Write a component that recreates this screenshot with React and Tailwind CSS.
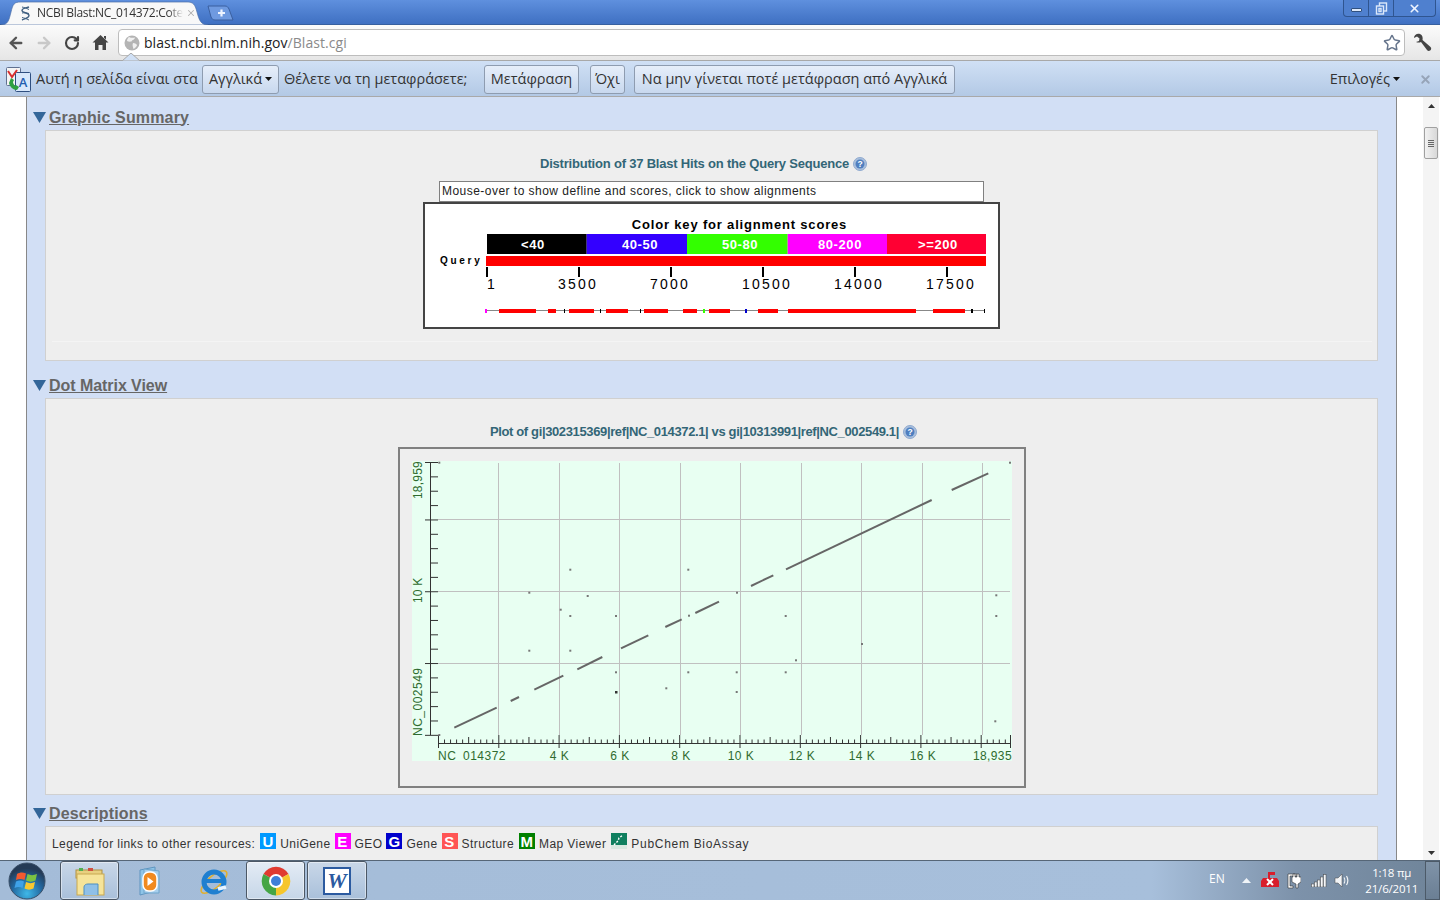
import { ArrowLeft, ArrowRight, RotateCw, Star, X } from 'lucide-react'

const SEGMENTS = [
  [454.3, 727.7, 496.7, 707.7], [510.7, 701, 519, 697], [534.3, 689.7, 563.3, 675.7],
  [577.3, 669.3, 602.3, 657], [621, 648.3, 648.3, 635.3], [665.3, 627, 681.7, 619.3],
  [695.3, 613, 719, 601.7], [751, 586, 773.3, 575.3], [786, 569.3, 931.7, 500], [951.7, 490, 988.3, 473.3],
]

const DOTS = [
  [529.3, 592.7], [587.7, 596], [560.7, 609.7], [570.3, 569.7], [688.3, 569.7], [570.3, 616], [616, 616], [689, 615.7],
  [529.3, 650.7], [570.3, 650.7], [616, 672.3], [688.3, 672.3], [666.3, 688.3], [737, 592.7], [785.7, 616],
  [862, 644], [796, 660.3], [736.7, 672.3], [785.7, 672.3], [736.7, 692], [996.3, 595.3], [996.3, 616], [995.3, 721.3],
  [1010, 462.7], [439.3, 462.7], [439.3, 735],
]

const HITS = [
  [499, 536], [548, 556], [569, 594], [606, 628], [644, 668], [683, 697], [709, 730], [758, 778], [788, 916], [933, 965],
]

const KEY = [
  ['<40', 487, 586.7, '#000000', 533], ['40-50', 586.7, 687, '#3300ff', 640], ['50-80', 687, 787.7, '#33ff00', 740],
  ['80-200', 787.7, 887, '#ff00ff', 840], ['>=200', 887, 986, '#ff0033', 938],
]

const RULER = [['1', 487, 487], ['3500', 579, 558], ['7000', 671, 650], ['10500', 763, 742], ['14000', 855, 834], ['17500', 947, 926]]

function HelpIcon() {
  return (
    <svg width="14" height="14" viewBox="0 0 14 14" className="shrink-0">
      <circle cx="7" cy="7" r="6.5" fill="#a9bfdc" stroke="#8fa9cf" />
      <circle cx="7" cy="7" r="4.5" fill="#4f7fc0" />
      <text x="7" y="10" textAnchor="middle" fontSize="8.5" fontWeight="700" fill="#fff" fontFamily="Liberation Sans">?</text>
    </svg>
  )
}

function Heading({ className = 'tracking-[0.15px]', children }) {
  return (
    <div className="flex items-center h-[18px] mb-[4px] ml-[6px] pt-[1px]">
      <svg width="13" height="11" viewBox="0 0 13 11" className="mr-[3px] shrink-0">
        <path d="M0 0H13L6.5 11Z" fill="#336699" />
      </svg>
      <span className={`text-[16px] font-bold underline text-[#666666] ${className}`}>{children}</span>
    </div>
  )
}

function ChartTitle({ className, children }) {
  return (
    <div className={`flex items-center gap-[4px] h-[16px] mr-[16px] text-[13px] font-bold text-[#336677] ${className}`}>
      <span>{children}</span>
      <HelpIcon />
    </div>
  )
}

function ColorKey() {
  return (
    <svg width="573" height="122" viewBox="425 204 573 122" fontFamily="Liberation Sans" className="block">
      <text x="739.5" y="229" textAnchor="middle" fontSize="13" fontWeight="700" letterSpacing="0.82">Color key for alignment scores</text>
      {KEY.map(([label, x1, x2, fill, cx]) => (
        <g key={label}>
          <rect x={x1} y="234" width={x2 - x1} height="20" fill={fill} />
          <text x={cx} y="249" textAnchor="middle" fontSize="13" fontWeight="700" letterSpacing="0.6" fill="#fff">{label}</text>
        </g>
      ))}
      <text x="440" y="264" fontSize="10" fontWeight="700" letterSpacing="2.7">Query</text>
      <rect x="486" y="256" width="500" height="10" fill="#ff0000" />
      {RULER.map(([label, x, tx]) => (
        <g key={label}>
          <rect x={x - 1} y="267" width="2" height="10" fill="#000" />
          <text x={tx} y="289" fontSize="14" letterSpacing="2.2">{label}</text>
        </g>
      ))}
      <rect x="486" y="310" width="499" height="1" fill="#888888" />
      {HITS.map(([a, b]) => <rect key={a} x={a} y="309" width={b - a} height="4" fill="#ff0000" />)}
      <rect x="485" y="309" width="2" height="4" fill="#ff00ff" />
      <rect x="703" y="309" width="2" height="4" fill="#33ff00" />
      <rect x="745" y="309" width="2" height="4" fill="#0000cc" />
      <rect x="971" y="309" width="2" height="4" fill="#000" />
      {[564, 600, 640, 984].map((x) => <rect key={x} x={x} y="309" width="1" height="4" fill="#000" />)}
    </svg>
  )
}

function DotMatrix() {
  const xTicks = []
  for (let i = 0; i * 6.03 <= 572; i++) {
    const x = 438.5 + i * 6.03
    const top = i % 10 === 0 ? 735 : i % 5 === 0 ? 737 : 739.5
    const bottom = i % 10 === 0 ? 748 : 743
    xTicks.push(<line key={i} x1={x} x2={x} y1={top} y2={bottom} />)
  }
  xTicks.push(<line key="end" x1="1010.5" x2="1010.5" y1="735" y2="748" />)
  const yTicks = []
  for (let i = 0; i <= 19; i++) {
    const y = 462.5 + i * 14.36
    const major = i === 0 || (i + 1) % 5 === 0
    yTicks.push(<line key={i} x1={major ? 425 : 430} x2="438" y1={y} y2={y} />)
  }
  return (
    <svg width="624" height="337" viewBox="400 449 624 337" fontFamily="Liberation Sans" className="block">
      <rect x="412" y="461" width="600" height="300" fill="#e8fff2" />
      <g stroke="#c0c0c0" strokeWidth="1">
        {[498.5, 559.5, 619.5, 680.5, 740.5, 801.5, 861.5, 922.5, 982.5].map((x) => <line key={x} x1={x} x2={x} y1="463" y2="735" />)}
        {[519.5, 591.5, 663.5].map((y) => <line key={y} x1="438" x2="1010" y1={y} y2={y} />)}
      </g>
      <g stroke="#333333" strokeWidth="1">
        <line x1="430.5" x2="430.5" y1="462" y2="735" />
        <line x1="438" x2="1011" y1="743.5" y2="743.5" />
        {xTicks}
        {yTicks}
      </g>
      <g stroke="#666666" strokeWidth="2">
        {SEGMENTS.map((s) => <line key={s[0]} x1={s[0]} y1={s[1]} x2={s[2]} y2={s[3]} />)}
      </g>
      {DOTS.map(([x, y]) => <rect key={`${x}-${y}`} x={x - 1} y={y - 1} width="2" height="2" fill="#777777" />)}
      <rect x="615" y="691" width="2.5" height="2.5" fill="#333333" />
      <g fill="#2f6b2f" fontSize="12">
        <text x="438" y="760" letterSpacing="0.5">NC</text>
        <text x="463" y="760" letterSpacing="0.5">014372</text>
        {[['4 K', 559.5], ['6 K', 620], ['8 K', 681], ['10 K', 741], ['12 K', 802], ['14 K', 862], ['16 K', 923]].map(([t, x]) => (
          <text key={t} x={x} y="760" textAnchor="middle" letterSpacing="0.5">{t}</text>
        ))}
        <text x="1012" y="760" textAnchor="end" letterSpacing="0.4">18,935</text>
        <text transform="translate(422 499) rotate(-90)" letterSpacing="0.2">18,959</text>
        <text transform="translate(422 603) rotate(-90)" letterSpacing="0.2">10 K</text>
        <text transform="translate(422 736) rotate(-90)" letterSpacing="0.5">NC_002549</text>
      </g>
    </svg>
  )
}

function LegendIcon({ bg, color = '#fff', children }) {
  return (
    <span className="w-[16px] h-[16px] mb-[6px] flex items-center justify-center text-[15px] leading-none font-bold shrink-0" style={{ backgroundColor: bg, color }}>
      {children}
    </span>
  )
}

function Legend() {
  return (
    <div className="flex items-center h-[34px] pl-[6px] text-[12px] tracking-[0.42px] text-[#333333] whitespace-nowrap">
      <span className="mr-[5px]">Legend for links to other resources:</span>
      <LegendIcon bg="#0099ff">U</LegendIcon>
      <span className="ml-[4px] mr-[4px]">UniGene</span>
      <LegendIcon bg="#ff00ff">E</LegendIcon>
      <span className="ml-[4px] mr-[4px]">GEO</span>
      <LegendIcon bg="#0000cc">G</LegendIcon>
      <span className="ml-[4px] mr-[4px]">Gene</span>
      <LegendIcon bg="#ff5555">S</LegendIcon>
      <span className="ml-[4px] mr-[5px]">Structure</span>
      <LegendIcon bg="#008000">M</LegendIcon>
      <span className="ml-[4px] mr-[5px]">Map Viewer</span>
      <svg width="16" height="16" viewBox="0 0 16 16" className="mb-[6px] shrink-0">
        <rect width="16" height="16" fill="#0f7f5f" />
        <rect x="0" y="12" width="16" height="4" fill="#d8e8e0" />
        <path d="M3 12L7 8L8 5L12 2" stroke="#fff" strokeWidth="1.4" strokeDasharray="2 1.5" fill="none" />
      </svg>
      <span className="ml-[4px] tracking-[0.7px]">PubChem BioAssay</span>
    </div>
  )
}

function Content() {
  return (
    <div className="flex-1 min-h-0 flex overflow-hidden bg-white font-['Liberation_Sans',Arial,sans-serif]">
      <div className="w-[27px] shrink-0 border-r border-[#888888]" />
      <div className="w-[1370px] shrink-0 bg-[#d2dff5] border-r border-[#888888] pt-[11px]">
        <Heading>Graphic Summary</Heading>
        <div className="ml-[18px] w-[1333px] h-[231px] border border-[#d0d0d0] bg-[#eeeeee] flex flex-col items-center pt-[25px]">
          <ChartTitle className="tracking-[-0.2px]">Distribution of 37 Blast Hits on the Query Sequence</ChartTitle>
          <div className="mt-[9px] w-[545px] h-[21px] shrink-0 border border-[#808080] bg-white px-[2px] text-[12px] leading-[19px] tracking-[0.47px] text-[#222222] whitespace-nowrap">
            Mouse-over to show defline and scores, click to show alignments
          </div>
          <div className="w-[577px] h-[127px] shrink-0 border-2 border-[#444444] bg-white">
            <ColorKey />
          </div>
          <div className="mt-[12px] w-[1320px] h-[1px] shrink-0 bg-[#f4f4f4]" />
        </div>
        <div className="mt-[15px]">
          <Heading className="tracking-[-0.05px]">Dot Matrix View</Heading>
        </div>
        <div className="ml-[18px] w-[1333px] h-[397px] border border-[#d0d0d0] bg-[#eeeeee] flex flex-col items-center pt-[25px]">
          <ChartTitle className="tracking-[-0.37px]">Plot of gi|302315369|ref|NC_014372.1| vs gi|10313991|ref|NC_002549.1|</ChartTitle>
          <div className="mt-[7px] w-[628px] h-[341px] shrink-0 border-2 border-[#808080]">
            <DotMatrix />
          </div>
        </div>
        <div className="mt-[9px]">
          <Heading>Descriptions</Heading>
        </div>
        <div className="ml-[18px] w-[1333px] h-[60px] border border-[#d0d0d0] bg-[#eeeeee]">
          <Legend />
        </div>
      </div>
      <div className="w-[26px] shrink-0" />
      <div className="w-[16px] shrink-0 bg-[#f4f4f4] flex flex-col items-center justify-between pt-[7px] pb-[5px]">
        <div className="flex flex-col items-center gap-[19px]">
          <svg width="7" height="4" viewBox="0 0 7 4"><path d="M3.5 0L7 4H0Z" fill="#333" /></svg>
          <div className="w-[14px] h-[32px] rounded-[2px] border border-[#a0a0a0] bg-gradient-to-r from-[#f2f2f2] to-[#d8d8d8] flex flex-col items-center justify-center gap-[1px]">
            <div className="w-[6px] h-[1px] bg-[#666666]" />
            <div className="w-[6px] h-[1px] bg-[#666666]" />
            <div className="w-[6px] h-[1px] bg-[#666666]" />
            <div className="w-[6px] h-[1px] bg-[#666666]" />
          </div>
        </div>
        <svg width="7" height="4" viewBox="0 0 7 4"><path d="M0 0H7L3.5 4Z" fill="#333" /></svg>
      </div>
    </div>
  )
}

function TabBar() {
  return (
    <div className="h-[25px] shrink-0 flex bg-gradient-to-b from-[#5f90de] to-[#3f70c2] border-b border-[#365f9f]">
      <div className="relative w-[207px] h-[24px] mt-[1px] ml-[1px] shrink-0 flex items-center pl-[17px]">
        <svg width="207" height="24" viewBox="0 0 207 24" className="absolute inset-0">
          <path d="M0 24C7 24 8 19 10 11C12 3 13 1 20 1H186C192 1 194 3 196 11C198 19 200 24 207 24Z" fill="#f8f8f8" stroke="#4a6ea8" strokeWidth="0.7" />
        </svg>
        <svg width="15" height="15" viewBox="0 0 15 15" className="relative shrink-0" fill="none" stroke="#3f5f80" strokeWidth="1.4">
          <path d="M11 1C8 2 4 2 4 4.500C4 7 11 6.500 11 9.500C11 12 7 12.500 4 14" />
          <path d="M4 1C6 1.500 8 2 11 3.500M4 7C6 6.500 9 7 11 7.500M4 11.500C6 12 8 12.500 11 14" strokeWidth="1" />
        </svg>
        <span className="relative ml-[4px] w-[146px] overflow-hidden whitespace-nowrap text-[12px] text-[#333333] font-['Open_Sans',sans-serif] tracking-[-0.3px] [mask-image:linear-gradient(90deg,#000_90%,transparent)]">
          NCBI Blast:NC_014372:Cote
        </span>
        <X size={10} strokeWidth={2.5} className="relative ml-[3px] text-[#b0b0b0]" />
      </div>
      <svg width="28" height="16" viewBox="0 0 28 16" className="mt-[5px] -ml-[1px] shrink-0">
        <path d="M1 1H18C20 1 21 2 22 4L26 15H8C6 15 5 14 4 12Z" fill="#6f9ae0" stroke="#3a5f9f" />
        <path d="M11 8H18M14.5 4.5V11.5" stroke="#eef4ff" strokeWidth="2.2" />
      </svg>
      <div className="flex-1" />
      <div className="flex h-[17px] w-[93px] mr-[4px] shrink-0 border border-t-0 border-[#2f5590] rounded-b-[4px] bg-[#4f80cf] text-[#eef4ff]">
        <div className="w-[25px] border-r border-[#2f5590] flex items-center justify-center">
          <div className="w-[11px] h-[4px] mt-[4px] border border-[#30507f] rounded-[1px] bg-[#dce8fa]" />
        </div>
        <div className="w-[25px] border-r border-[#2f5590] flex items-center justify-center">
          <svg width="13" height="13" viewBox="0 0 13 13" fill="none" stroke="#dce8fa" strokeWidth="1.4">
            <rect x="4.5" y="1" width="7" height="8" />
            <rect x="1.5" y="4" width="7" height="8" fill="#4f80cf" />
            <rect x="4" y="6.5" width="2" height="3" />
          </svg>
        </div>
        <div className="flex-1 flex items-center justify-center">
          <X size={13} strokeWidth={3} />
        </div>
      </div>
    </div>
  )
}

function Toolbar() {
  return (
    <div className="relative h-[36px] shrink-0 flex items-center bg-gradient-to-b from-[#fbfbfb] to-[#e6e6e6] border-b border-[#a8a8a8] font-['Open_Sans',sans-serif]">
      <ArrowLeft size={18} strokeWidth={3.2} className="ml-[7px] text-[#555555]" />
      <ArrowRight size={18} strokeWidth={3.2} className="ml-[10px] text-[#c8c8c8]" />
      <RotateCw size={16} strokeWidth={3.2} className="ml-[11px] text-[#444444]" />
      <svg width="17" height="17" viewBox="0 0 17 17" className="ml-[12px]">
        <path d="M8.5 1L16.5 8.5H14V16H10.5V11H6.5V16H3V8.5H0.5ZM12 2H14V5.5L12 3.7Z" fill="#444444" />
      </svg>
      <div className="ml-[9px] w-[1287px] h-[27px] bg-white border border-[#bdbdbd] rounded-[4px] flex items-center pl-[5px] pr-[3px]">
        <svg width="16" height="16" viewBox="0 0 16 16">
          <circle cx="8" cy="8" r="7.5" fill="#b4b4b4" />
          <path d="M5 2C7 3 9 3 11 2.5C11 4 9 5 8 5.5C8 7 5 7 3 6C3 4 4 3 5 2ZM9 8C11 8 13 9 13 10.5C12 12.5 10.5 13.5 9.5 14C9 12 8 10 9 8Z" fill="#f0f0f0" />
        </svg>
        <span className="ml-[4px] text-[14px] text-[#222222] tracking-[0.05px]">
          blast.ncbi.nlm.nih.gov<span className="text-[#8a8a8a]">/Blast.cgi</span>
        </span>
        <Star size={18} strokeWidth={2} className="ml-auto text-[#66758c]" />
      </div>
      <svg width="20" height="20" viewBox="0 0 20 20" className="ml-[7px]">
        <path d="M8 1C5 0 2 2 2 5L5 3.500L7.500 5.500L7 8L4 9C6 10 8 9.500 9 9L15 17C16 18.500 18.500 18 19 16.500C19.500 15 19 14.500 18 13.500L10.500 7C11 4.500 10.500 2 8 1Z" fill="#444444" />
      </svg>
      <svg width="18" height="8" viewBox="0 0 18 8" className="absolute left-[122px] -bottom-[1px]">
        <path d="M0 8L9 0L18 8Z" fill="#d0e0f5" stroke="#a8a8a8" />
      </svg>
    </div>
  )
}

function BarButton({ className, children }) {
  return (
    <div className={`h-[29px] flex items-center justify-center rounded-[3px] border border-[#8e9cb0] bg-gradient-to-b from-[#e6eefa] to-[#c8d8ee] ${className}`}>
      {children}
    </div>
  )
}

function Caret() {
  return <svg width="7" height="4" viewBox="0 0 7 4" className="ml-[3px]"><path d="M0 0H7L3.5 4Z" fill="#111" /></svg>
}

function TranslateBar() {
  return (
    <div className="h-[36px] shrink-0 flex items-center pt-[1px] bg-gradient-to-b from-[#d0e0f5] to-[#b3c9e5] border-b border-[#a9a9a9] text-[14.5px] text-[#333333] whitespace-nowrap font-['Open_Sans',sans-serif]">
      <svg width="25" height="25" viewBox="0 0 25 25" className="ml-[6px] shrink-0">
        <rect x="0.500" y="0.500" width="14" height="18" rx="1" fill="#f4f4f4" stroke="#607090" />
        <rect x="9.500" y="5.500" width="15" height="19" rx="1" fill="#d8e8fb" stroke="#2f4f80" />
        <path d="M2 4L6 10L11 3" stroke="#d83030" strokeWidth="2" fill="none" />
        <path d="M3 16C4 20 7 23 11 23L13 20L10 18L9 19C8 18 7 16 7 15L8 13L5 11Z" fill="#2fa040" />
        <text x="17" y="20" textAnchor="middle" fontSize="13" fontWeight="600" fill="#1f5fb0" fontFamily="Open Sans">A</text>
      </svg>
      <span className="ml-[5px] w-[161px]">Αυτή η σελίδα είναι στα</span>
      <BarButton className="ml-[5px] w-[77px]">Αγγλικά<Caret /></BarButton>
      <span className="ml-[5px] w-[184px]">Θέλετε να τη μεταφράσετε;</span>
      <BarButton className="ml-[16px] w-[95px]">Μετάφραση</BarButton>
      <BarButton className="ml-[11px] w-[35px]">Όχι</BarButton>
      <BarButton className="ml-[9px] w-[321px]">Να μην γίνεται ποτέ μετάφραση από Αγγλικά</BarButton>
      <span className="ml-auto">Επιλογές</span>
      <Caret />
      <X size={13} strokeWidth={3.5} className="ml-[19px] mr-[8px] text-[#96a4b8]" />
    </div>
  )
}

function TaskButton({ className = '', children }) {
  return (
    <div className={`h-[39px] flex items-center justify-center rounded-[3px] border border-[#4c5866] bg-gradient-to-b from-[#c9d7e8] to-[#a9c0da] shadow-[inset_0_0_0_1px_rgba(255,255,255,0.45)] ${className}`}>
      {children}
    </div>
  )
}

function Taskbar() {
  return (
    <div className="h-[40px] shrink-0 flex items-center border-t border-[#566677] bg-[linear-gradient(90deg,#a4bcd8_0%,#a7bfdb_80%,#7d92aa_90%,#6f8499_100%)] font-['Open_Sans',sans-serif]">
      <svg width="38" height="38" viewBox="0 0 38 38" className="ml-[8px] shrink-0">
        <defs>
          <radialGradient id="orb" cx="50%" cy="85%" r="70%">
            <stop offset="0%" stopColor="#3fb8e8" />
            <stop offset="60%" stopColor="#22679f" />
            <stop offset="100%" stopColor="#243a56" />
          </radialGradient>
        </defs>
        <circle cx="19" cy="19" r="18" fill="url(#orb)" stroke="#3a4f68" />
        <path d="M9 12C12 10 15 10 18 11.500L16.500 18C13.500 16.500 11 16.500 8 18Z" fill="#f25a30" />
        <path d="M19.500 12C22.500 13.500 25.500 13.500 29 12L27.500 18.500C24.500 20 21 20 18 18.500Z" fill="#7cc242" />
        <path d="M8 19.500C11 18 13.500 18 16 19.500L14.500 26C12 24.500 9.500 24.500 6.500 26Z" fill="#3fa2e8" />
        <path d="M18 20C21 21.500 24 21.500 27 20L25.500 26.500C22.500 28 19.500 28 16.500 26.500Z" fill="#f8c830" />
      </svg>
      <TaskButton className="ml-[14px] w-[59px]">
        <svg width="32" height="32" viewBox="0 0 32 32">
          <rect x="2" y="5" width="26" height="8" fill="#e8d080" stroke="#b09040" />
          <rect x="5" y="3" width="4" height="3" fill="#50b050" />
          <rect x="14" y="3" width="5" height="3" fill="#d05040" />
          <rect x="3" y="9" width="27" height="21" fill="#f6e49a" stroke="#c8a850" />
          <path d="M10 30V22C10 20 12 19 14 19H24V30" fill="#8fc0e8" stroke="#4f8fc0" />
        </svg>
      </TaskButton>
      <div className="ml-[2px] w-[57px] h-[39px] flex items-center justify-center">
        <svg width="30" height="32" viewBox="0 0 30 32">
          <path d="M5 5L20 2V26L5 30Z" fill="#8fc5e8" stroke="#5f95c0" />
          <path d="M9 4L24 6V28L9 28Z" fill="#a8d0ee" stroke="#6fa5cc" />
          <rect x="8" y="7" width="14" height="19" rx="6" fill="#f08a20" stroke="#fff" strokeWidth="1.5" />
          <path d="M12.500 12L18.500 16.500L12.500 21Z" fill="#fff" />
        </svg>
      </div>
      <div className="ml-[7px] w-[57px] h-[39px] flex items-center justify-center">
        <svg width="32" height="32" viewBox="0 0 32 32" fill="none">
          <ellipse cx="16" cy="17" rx="16" ry="6" transform="rotate(-40 16 17)" stroke="#e0b030" strokeWidth="1.6" />
          <circle cx="16" cy="17" r="10" stroke="#1f7fd0" strokeWidth="5" />
          <path d="M7 16H25" stroke="#1f7fd0" strokeWidth="4" />
          <path d="M20 24L28 22" stroke="#e8f4ff" strokeWidth="3.500" />
        </svg>
      </div>
      <TaskButton className="ml-[4px] w-[59px] from-[#e4ecf5] to-[#c6d6e8]">
        <svg width="30" height="30" viewBox="0 0 30 30">
          <path d="M15 15L2.500 8A14.500 14.500 0 0 1 27.500 8Z" fill="#e03a30" />
          <path d="M15 15L2.500 8A14.500 14.500 0 0 0 15 29.500L21 17Z" fill="#45a545" />
          <path d="M15 15L27.500 8A14.500 14.500 0 0 1 15 29.500Z" fill="#f6c62c" />
          <circle cx="15" cy="15" r="7" fill="#fff" />
          <circle cx="15" cy="15" r="5" fill="#3f7fd8" />
        </svg>
      </TaskButton>
      <TaskButton className="ml-[2px] w-[60px]">
        <div className="w-[28px] h-[28px] bg-white border-2 border-[#2b5aa0] flex items-center justify-center text-[22px] leading-none font-bold italic text-[#2b5aa0] font-['Liberation_Serif',serif]">
          W
        </div>
      </TaskButton>
      <span className="ml-[842px] mb-[4px] text-[12px] text-white">EN</span>
      <svg width="9" height="5" viewBox="0 0 9 5" className="ml-[17px]"><path d="M4.500 0L9 5H0Z" fill="#f0f4f8" /></svg>
      <svg width="18" height="16" viewBox="0 0 18 16" className="ml-[10px] -mt-[1px]">
        <path d="M7 0H14V3H9V6H16L18 9V15H0V9L2 6H7Z" fill="#d81e2c" />
        <path d="M6 7L12 13M12 7L6 13" stroke="#fff" strokeWidth="2" />
      </svg>
      <svg width="15" height="17" viewBox="0 0 15 17" className="ml-[7px]" fill="#fff">
        <path d="M2 2H11V4H4V14H7V16H2Z" stroke="#333" strokeWidth="0.6" />
        <path d="M7 2H9V5H11V2H13V5H15V10L12 12V16H10V12L6 10V5H7Z" stroke="#333" strokeWidth="0.6" />
      </svg>
      <svg width="16" height="13" viewBox="0 0 16 13" className="ml-[10px]" fill="#f4f6f8" stroke="#444" strokeWidth="0.5">
        <rect x="0.500" y="10" width="2.500" height="3" />
        <rect x="3.500" y="8" width="2.500" height="5" />
        <rect x="6.500" y="6" width="2.500" height="7" />
        <rect x="9.500" y="3" width="2.500" height="10" />
        <rect x="12.500" y="0.500" width="2.500" height="12.500" />
      </svg>
      <svg width="15" height="15" viewBox="0 0 15 15" className="ml-[7px]" fill="none">
        <path d="M1 5H4L8 1V14L4 10H1Z" fill="#f2f4f6" stroke="#444" strokeWidth="0.5" />
        <path d="M10 4.500C11 6 11 9 10 10.500M12.500 3C14 5.500 14 9.500 12.500 12" stroke="#f2f4f6" strokeWidth="1.2" />
      </svg>
      <div className="ml-[11px] w-[64px] flex flex-col items-center text-[11.5px] leading-[16px] tracking-[-0.2px] text-white">
        <span>1:18 πμ</span>
        <span>21/6/2011</span>
      </div>
      <div className="ml-auto w-[15px] h-[39px] border border-[#4c5a68] bg-gradient-to-b from-[#7f93a8] to-[#6b7f94]" />
    </div>
  )
}

export default function App() {
  return (
    <div className="w-[1440px] h-[900px] flex flex-col overflow-hidden">
      <TabBar />
      <Toolbar />
      <TranslateBar />
      <Content />
      <Taskbar />
    </div>
  )
}
